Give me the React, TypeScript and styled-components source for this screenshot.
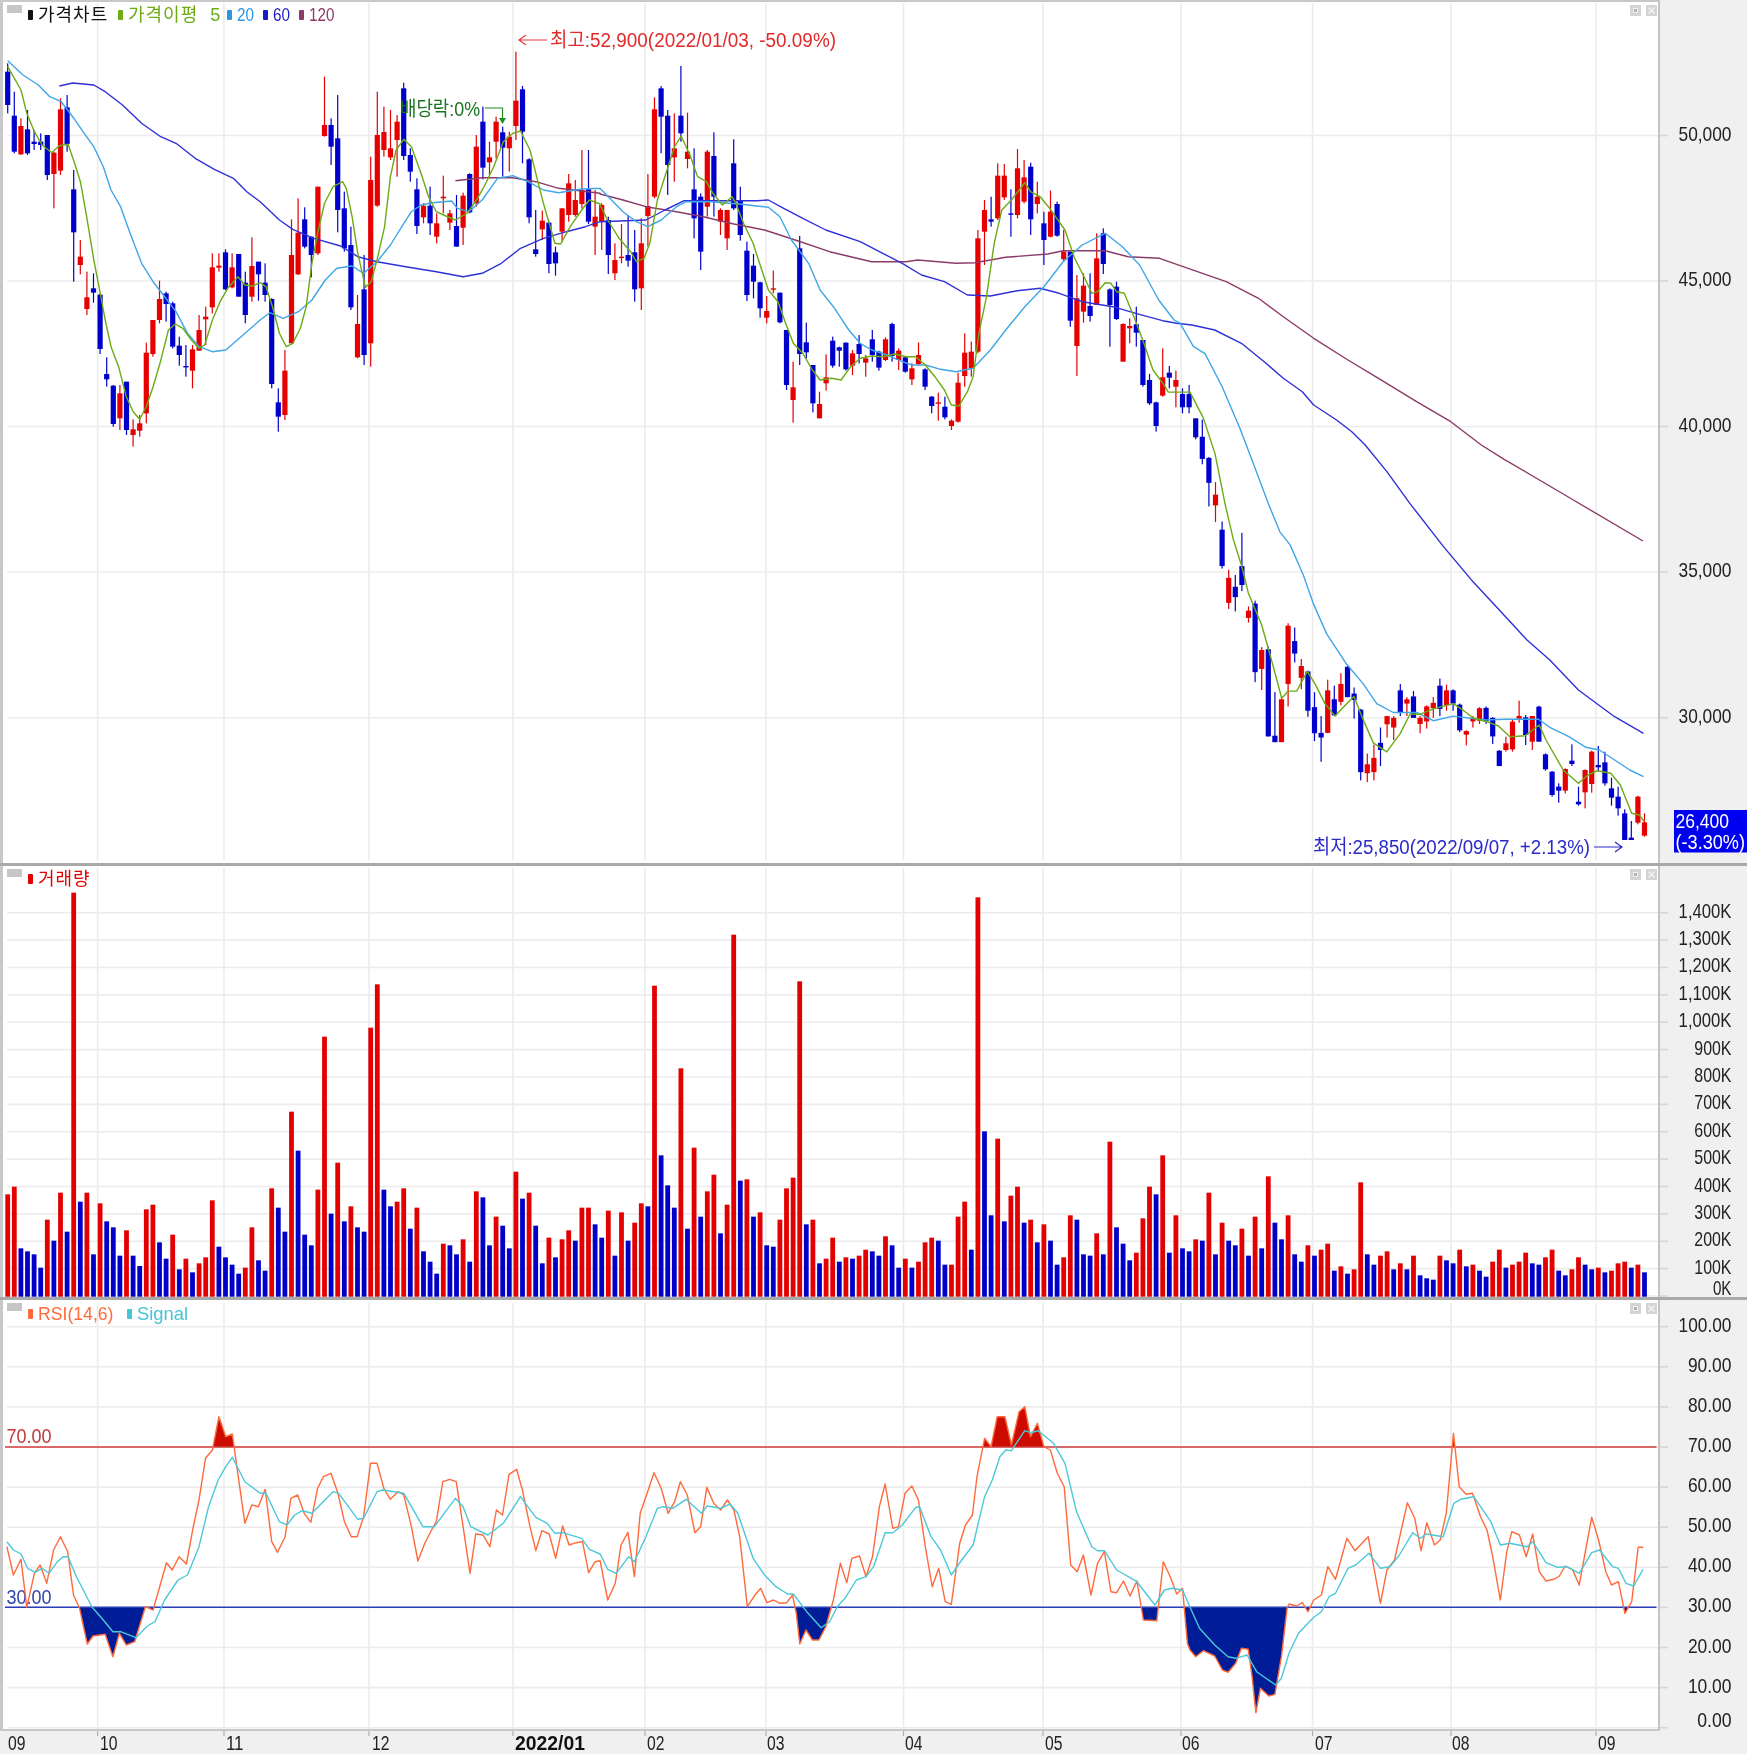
import React from "react";
import styled, { createGlobalStyle } from "styled-components";

const GlobalStyle = createGlobalStyle`
  html, body { margin: 0; padding: 0; background: #f0f0f0; }
`;

const FONT = `"Liberation Sans", "Noto Sans CJK KR", sans-serif`;
const PLOT_W = 1660;
const AXIS_W = 87;

const Page = styled.div`
  width: 1747px;
  height: 1754px;
  display: flex;
  flex-direction: column;
  background: #f0f0f0;
  overflow: hidden;
  font-family: ${FONT};
`;

const Pane = styled.section<{ $h: number; $line?: boolean }>`
  flex: 0 0 ${(p) => p.$h}px;
  display: flex;
  box-sizing: border-box;
  border-bottom: ${(p) => (p.$line ? "3px solid #a9a9a9" : "none")};
`;

const Plot = styled.div<{ $top?: boolean; $bottom?: boolean }>`
  position: relative;
  flex: 0 0 ${PLOT_W}px;
  background: #fff;
  box-sizing: border-box;
  box-shadow: inset 3px 0 0 #c8c8c8, inset -2px 0 0 #c4c4c4
    ${(p) => (p.$top ? ", inset 0 2px 0 #c8c8c8" : "")}
    ${(p) => (p.$bottom ? ", inset 0 -2px 0 #c8c8c8" : "")};
`;

const Axis = styled.div`
  flex: 0 0 ${AXIS_W}px;
`;

const ChartSvg = styled.svg`
  display: block;
  filter: blur(0.35px);
`;

const CollapseTab = styled.div<{ $top: number }>`
  position: absolute;
  left: 7px;
  top: ${(p) => p.$top}px;
  width: 15px;
  height: 8px;
  background: #c6c6c6;
`;

const Legend = styled.div<{ $top: number }>`
  position: absolute;
  left: 28px;
  top: ${(p) => p.$top}px;
  height: 20px;
  display: flex;
  align-items: center;
  gap: 10px;
`;

const LegendItem = styled.div`
  display: flex;
  align-items: center;
  gap: 5px;
`;

const Marker = styled.span<{ $color: string }>`
  width: 5px;
  height: 10px;
  border-radius: 1px;
  background: ${(p) => p.$color};
`;

const LegendText = styled.span<{ $color: string; $w: number; $squeeze?: number }>`
  display: inline-block;
  width: ${(p) => p.$w}px;
  font-size: 18px;
  line-height: 20px;
  white-space: pre;
  color: ${(p) => p.$color};
  letter-spacing: ${(p) => (p.$squeeze ? "0" : "1px")};
  transform-origin: left center;
  transform: scaleX(${(p) => p.$squeeze ?? 1});
  filter: blur(0.3px);
`;

const WinButtons = styled.div<{ $top: number }>`
  position: absolute;
  right: 3px;
  top: ${(p) => p.$top}px;
  display: flex;
  gap: 5px;
`;

const WinButton = styled.div`
  width: 11px;
  height: 11px;
  background: #d4d4d4;
  display: flex;
  align-items: center;
  justify-content: center;
`;

const RestoreGlyph = styled.span`
  width: 3px;
  height: 3px;
  background: #b0b0b0;
  border: 1.5px solid #f4f4f4;
`;

const TimeAxis = styled.div`
  flex: 0 0 23px;
`;

const Label = styled.text<{ $size?: number; $bold?: boolean }>`
  font-family: ${FONT};
  font-size: ${(p) => p.$size ?? 21}px;
  font-weight: ${(p) => (p.$bold ? 700 : 400)};
`;

type Candle = [number, number, number, number, number];
const r = 1;
const b = 0;

// [colour, wick top, body top, body bottom, wick bottom]; y values are in 3x units of the page
const candlesA: Candle[] = [
  [b,190,215,315,340],[b,275,347,455,460],[r,355,378,463,465],[b,330,388,460,465],[b,390,425,432,450],
  [b,400,425,435,450],[b,405,405,525,540],[r,455,458,522,625],[r,295,328,512,525],[b,285,322,432,455],
  [b,510,568,697,845],[r,720,770,795,823],[r,815,892,927,945],[b,820,865,878,908],[b,880,884,1047,1062],
  [b,1072,1122,1138,1160],[b,1155,1157,1272,1280],[r,1155,1180,1255,1290],[b,1145,1145,1290,1305],[r,1258,1288,1305,1340],
  [r,1245,1270,1292,1310],[r,1028,1058,1240,1270],[r,960,960,1062,1070],[r,842,897,960,970],[b,875,880,912,965],
  [b,905,910,1040,1045],[b,1010,1037,1065,1097],[b,1035,1098,1102,1130],[r,1035,1048,1112,1165],[r,945,990,1052,1050],
  [r,920,950,958,1035],[r,760,802,922,940],[r,760,797,803,815],[b,748,757,868,870],[r,760,802,862,865],
  [b,762,762,890,890],[b,815,848,945,970],[r,712,798,890,905],[b,785,785,823,902],[b,790,848,885,905],
  [b,895,897,1152,1165],[b,1165,1207,1250,1295],[r,1050,1112,1245,1260],[r,658,765,1030,945],[r,595,698,823,825],
  [b,622,658,740,745],[b,710,710,765,832],[r,560,560,760,765],[r,230,375,408,410],[b,355,375,440,495],
  [b,285,415,630,697],[b,575,625,745,755],[b,680,735,922,930],[r,885,972,1072,1075],[b,765,868,1065,1095],
  [r,470,540,1030,1100],[r,275,405,617,620],[r,320,396,450,470],[r,330,445,472,480],[r,345,365,420,530],
  [b,248,265,468,480],[b,445,465,515,545],[b,535,568,678,702],[r,610,617,652,670],[b,560,617,670,705],
  [r,640,670,710,730],[r,527,590,595,640],[r,630,640,668,690],[b,585,678,740,740],[r,578,587,683,735],
  [b,520,522,637,640],[r,405,440,610,620],[b,320,365,503,538],[r,425,472,487,525],[r,350,365,425,475],
  [b,380,397,443,530],[r,395,410,445,515],[r,155,302,378,420],[b,258,268,395,490],[b,475,478,652,670],
  [b,630,748,762,770],[r,632,662,688,720],[b,665,668,792,820],[b,740,757,790,827],[r,625,625,695,725],
  [r,522,550,645,665],[r,540,600,645,650],[r,450,570,612,625],[b,450,568,665,672],[r,570,650,680,765],
  [r,610,615,665,750],[b,650,660,765,822],[r,730,780,820,840],[r,672,770,773,790],[b,645,765,782,800],
  [b,690,757,868,905],[r,655,730,865,930],[r,522,618,648,740],[r,292,328,590,595],[b,258,265,350,460],
  [b,330,347,495,585],[r,340,445,472,545],[b,198,347,400,425],[r,338,455,477,505],[b,445,568,655,715],
  [b,580,590,755,810],[r,450,455,620,650],[b,397,468,590,650],[r,625,630,665,705],[r,630,630,715,750],
  [b,418,490,625,630],[b,560,600,705,722],[b,725,752,885,903],[b,762,797,845,895],[b,845,847,925,953],
  [r,888,933,953,970],[r,812,865,869,880],[b,878,878,967,970],[b,990,990,1155,1170],[r,1085,1162,1200,1268],
  [b,708,745,1062,1095],[b,968,1027,1057,1075],[b,1095,1095,1210,1237],[r,1175,1212,1255,1255],[r,1063,1132,1150,1172],
  [b,1010,1022,1097,1103],[b,1040,1042,1052,1100],[b,1027,1028,1108,1112],[r,1050,1060,1097,1125],[b,1005,1032,1062,1090],
  [r,1065,1075,1088,1130],[b,990,1018,1065,1085],[b,1052,1055,1103,1112],[r,1012,1018,1080,1083],[b,968,972,1068,1085],
  [r,1045,1052,1080,1110],[b,1068,1072,1115,1118],[r,1090,1105,1138,1155],[r,1027,1065,1092,1097],[b,1105,1108,1160,1170],
  [b,1188,1190,1218,1240],[r,1178,1207,1210,1262],[b,1190,1220,1252,1258],[r,1258,1262,1278,1290],[r,1118,1148,1265,1268],
  [r,1000,1058,1128,1160],[r,1025,1055,1105,1130],[r,690,715,1055,1060],[r,600,630,695,795],[b,590,658,665,680],
  [r,490,527,655,660],[r,492,527,592,600],[b,568,640,643,710],[r,447,505,645,655],[r,480,532,605,610],
  [b,488,500,658,705],[r,545,590,612,640],[b,635,670,720,795],[r,572,635,710,712],[b,605,612,707,710],
  [r,690,755,778,785],[b,755,755,962,980],[r,825,895,1038,1128],[r,820,857,935,968],[b,820,918,948,965],
  [r,700,775,915,915],[b,685,700,792,822],[b,865,868,915,1040],[b,845,860,957,960],[r,970,972,1085,1085],
  [r,955,978,985,1030],[b,920,973,998,1040],[b,1020,1020,1155,1160],[b,1122,1140,1210,1215],[b,1205,1207,1278,1295],
  [r,1045,1132,1187,1190],[b,1098,1118,1133,1165],[r,1112,1140,1160,1222],[b,1165,1182,1222,1240],[b,1155,1182,1222,1240],
  [b,1255,1255,1312,1318],
];

// same, y = 300 + value / 2.8
const candlesB: Candle[] = [
  [b,335,383,445,460],[b,440,442,512,578],[r,510,545,575,622],[b,620,643,745,752],[r,755,778,848,865],
  [b,770,803,832,872],[b,652,745,798,815],[r,858,870,890,903],[b,842,850,1042,1070],[r,972,980,1033,1092],
  [b,970,978,1222,1222],[b,1098,1220,1238,1238],[r,1110,1118,1238,1238],[r,905,912,1075,1138],[b,917,955,990,1015],
  [r,1005,1025,1058,1090],[b,1038,1040,1150,1167],[b,1098,1140,1213,1235],[b,1165,1212,1225,1293],[r,1063,1093,1212,1213],
  [b,1080,1118,1163,1165],[r,1045,1075,1125,1135],[b,1025,1027,1112,1112],[b,1085,1102,1120,1172],[b,1145,1147,1322,1345],
  [r,1270,1300,1325,1350],[r,1245,1282,1322,1345],[b,1197,1240,1260,1305],[r,1165,1165,1188,1225],[r,1165,1170,1197,1232],
  [b,1075,1093,1155,1165],[r,1112,1118,1130,1165],[b,1095,1110,1170,1170],[r,1165,1170,1187,1213],[r,1135,1138,1180,1200],
  [r,1112,1128,1143,1170],[b,1060,1080,1145,1165],[r,1077,1093,1135,1150],[b,1090,1093,1130,1150],[b,1130,1133,1205,1210],
  [r,1205,1207,1217,1247],[r,1165,1170,1180,1197],[r,1140,1143,1178,1187],[b,1138,1142,1180,1187],[b,1168,1170,1222,1243],
  [b,1260,1262,1305,1305],
];

// same, y = 640 + value / 3
const candlesC: Candle[] = [
  [r,290,310,330,335],[r,240,245,328,335],[r,182,228,236,248],[b,225,232,285,315],[r,228,228,305,330],
  [b,197,200,305,305],[b,340,343,388,392],[b,393,395,465,470],[b,430,440,452,488],[r,385,387,452,460],
  [b,313,362,372,378],[b,440,485,493,497],[r,388,390,457,505],[r,332,335,432,458],[b,318,375,382,395],
  [b,335,367,430,437],[b,413,445,473,497],[b,440,470,505,527],[b,508,520,600,600],[b,543,593,600,600],
  [r,467,470,548,553],[r,520,547,587,590],
];

const candles = [
  ...candlesA.map(([c, ...v]) => [c, ...v.map((y) => y / 3)]),
  ...candlesB.map(([c, ...v]) => [c, ...v.map((y) => 300 + y / 2.8)]),
  ...candlesC.map(([c, ...v]) => [c, ...v.map((y) => 640 + y / 3)]),
];

// [colour, bar top]
const volumesA: number[][] = [
  [r,1033],[r,1010],[b,1195],[b,1204],[b,1213],[b,1253],[r,1109],[b,1172],[r,1028],[b,1145],
  [r,128],[b,1055],[r,1028],[b,1213],[r,1060],[b,1114],[b,1132],[b,1217],[r,1141],[b,1217],
  [b,1248],[r,1078],[r,1064],[b,1177],[b,1226],[r,1154],[b,1258],[r,1226],[b,1267],[r,1240],
  [r,1222],[r,1051],[b,1190],[b,1222],[b,1244],[b,1271],[r,1253],[r,1132],[b,1231],[b,1262],
  [r,1015],[b,1073],[b,1145],[r,785],[b,902],[b,1154],[b,1186],[r,1019],[r,560],[b,1091],
  [r,938],[b,1114],[r,1069],[b,1132],[b,1145],[r,533],[r,403],[b,1019],[b,1069],[r,1055],
  [r,1015],[b,1136],[r,1073],[b,1204],[b,1235],[b,1271],[r,1181],[b,1186],[b,1213],[r,1168],
  [b,1235],[r,1024],[b,1042],[b,1186],[r,1100],[b,1127],[b,1195],[r,965],[b,1046],[r,1028],
  [b,1127],[b,1240],[r,1163],[b,1222],[r,1168],[r,1141],[b,1172],[r,1073],[r,1073],[b,1123],
  [b,1163],[r,1082],[b,1217],[r,1087],[b,1172],[r,1118],[r,1060],[b,1069],[r,407],[b,916],
  [b,1006],[b,1073],[r,655],[b,1136],[r,893],[b,1100],[r,1024],[r,974],[b,1150],[r,1064],
  [r,254],[b,992],[r,988],[b,1100],[r,1087],[b,1186],[b,1190],[r,1109],[r,1015],[r,983],
  [r,394],[b,1123],[r,1109],[b,1240],[r,1226],[r,1163],[b,1235],[r,1222],[b,1226],[r,1217],
  [r,1199],[b,1204],[b,1217],[r,1159],[b,1186],[b,1253],[r,1226],[b,1253],[r,1235],[r,1177],
  [r,1163],[b,1172],[b,1244],[r,1244],[r,1100],[r,1055],[b,1199],[r,142],[b,844],[b,1096],
  [r,866],[b,1114],[r,1037],[r,1010],[b,1118],[r,1109],[b,1177],[r,1123],[b,1172],[b,1244],
  [r,1222],[r,1096],[b,1109],[b,1213],[b,1217],[r,1150],[b,1213],[r,875],[b,1132],[b,1181],
  [b,1231],[r,1208],[r,1105],[r,1010],[b,1033],[r,916],[b,1208],[r,1096],[b,1195],[b,1204],
];

const volumesB: number[][] = [
  [r,418],[b,422],[r,278],[b,463],[r,368],[b,422],[b,436],[r,386],[b,467],[r,350],
  [b,445],[r,229],[b,368],[b,418],[r,346],[b,463],[b,485],[r,436],[b,467],[r,449],
  [r,431],[b,512],[r,499],[b,521],[r,508],[r,247],[b,463],[b,494],[r,467],[r,454],
  [b,508],[r,490],[b,508],[r,467],[b,526],[b,535],[b,539],[r,467],[b,481],[b,490],
  [r,449],[b,499],[r,494],[b,512],[b,530],[r,485],[r,449],[b,503],[r,494],[r,485],
  [r,458],[b,490],[b,494],[r,472],[r,449],[b,512],[b,526],[r,508],[r,472],[b,494],
  [b,508],[r,503],[b,517],[r,512],[r,490],[r,485],[b,503],[r,494],[b,517],
];

const volumes = [
  ...volumesA.map(([c, y]) => [c, 850 + y / 3]),
  ...volumesB.map(([c, y]) => [c, 1100 + y / 3]),
];

const barX = (i: number) => 7.7 + 6.6 * i;

// traced points, flat x,y lists, each with its own offset and scale
const trace = (list: number[], ox: number, sx: number, oy: number, sy: number) => {
  const out: number[][] = [];
  for (let i = 0; i < list.length; i += 2) out.push([ox + list[i] / sx, oy + list[i + 1] / sy]);
  return out;
};
const left = (l: number[]) => trace(l, 0, 2.613, 0, 3);
const mid = (l: number[]) => trace(l, 600, 2.613, 0, 3);
const right = (l: number[]) => trace(l, 1150, 2.626, 0, 3);
const lower = (l: number[]) => trace(l, 1100, 3, 300, 2.8);
const tail = (l: number[]) => trace(l, 1150, 2.626, 640, 3);
const rsiLeft = (l: number[]) => trace(l, 0, 2.613, 1280, 3);
const rsiMid = (l: number[]) => trace(l, 600, 2.613, 1280, 3);
const rsiRight = (l: number[]) => trace(l, 1150, 2.626, 1280, 3);

const ma5 = [
  ...left([20,200,55,270,70,340,90,395,110,435,135,458,155,437,178,433,195,490,210,545,225,640,245,780,262,880,275,960,290,1040,310,1100,330,1190,348,1235,365,1258,382,1220,400,1160,418,1090,440,990,458,972,478,985,500,1020,520,1045,535,1035,555,960,575,905,595,865,622,830,640,855,660,858,680,848,695,860,712,920,730,1000,748,1040,765,1030,785,985,800,920,815,790,830,700,848,610,870,560,895,545,905,565,920,650,935,760,955,862,970,845,985,780,1005,680,1020,530,1035,450,1055,418,1075,440,1100,520,1120,590,1140,635,1165,648,1190,660,1220,640,1245,600,1265,560,1290,500,1315,425,1340,400,1360,393,1385,450,1400,520,1420,610,1435,670,1450,730,1465,732,1490,680,1520,630,1540,600,1568,612]),
  ...mid([0,615,20,660,50,715,80,755,95,785,115,775,130,730,150,600,175,510,195,440,212,408,235,465,255,530,278,545,295,580,320,615,345,590,355,610,375,670,400,730,420,800,440,870,465,905,485,970,505,1030,530,1060,555,1110,575,1140,605,1135,630,1140,655,1100,680,1075,710,1068,740,1070,770,1062,800,1070,825,1070,850,1095,875,1130,900,1170,918,1215,938,1218,960,1175,975,1130,990,1000,1010,890,1030,730,1050,630,1075,600,1110,548,1125,575,1150,590,1175,625,1215,690,1240,775,1265,830,1285,880,1300,875,1320,848,1335,850,1350,875,1370,880,1395,950,1420,1025,1445,1110]),
  ...lower([190,235,205,258,240,258,270,258,310,330,345,430,375,570,400,670,425,745,445,820,485,910,515,1010,545,1115,565,1095,590,1095,622,1040,645,1075,675,1130,705,1165,735,1135,762,1110,785,1165,820,1240,860,1265,900,1215,930,1160,960,1160,1000,1145,1060,1130]),
  ...tail([815,205,850,235,885,245,915,258,945,290,985,287,1022,255,1040,300,1085,390,1125,430,1150,405,1175,392,1210,400,1235,435,1265,520,1285,525,1298,545]),
];

const ma20 = [
  ...left([20,182,60,225,100,255,130,290,160,305,190,350,220,400,245,440,270,500,290,570,315,620,340,700,370,790,400,845,430,890,460,935,490,1000,520,1040,555,1055,590,1050,620,1020,650,990,680,960,705,938,740,955,780,935,815,900,850,840,880,805,920,798,950,820,985,785,1020,735,1050,680,1075,635,1100,615,1130,608,1180,603,1195,625,1225,635,1260,600,1300,535,1340,527,1380,545,1420,570,1460,578,1520,567,1568,565]),
  ...mid([0,565,30,600,60,635,95,665,125,680,160,660,200,620,225,605,290,605,370,613,440,622,470,650,500,720,545,790,575,870,610,920,650,990,680,1030,710,1050,750,1065,790,1085,815,1095,850,1095,890,1108,930,1115,975,1105,1020,1050,1060,990,1110,920,1160,860,1210,785,1260,735,1320,700,1365,740,1410,795,1460,900,1500,960]),
  ...lower([240,65,280,130,315,150,365,240,420,360,465,470,505,570,540,650,570,685,610,770,640,850,680,935,740,1020,790,1075,830,1130,880,1155,950,1155,1000,1178,1060,1165]),
  ...tail([880,240,930,238,1020,238,1050,262,1100,290,1145,322,1180,330,1220,360,1260,390,1296,410]),
];

const ma60 = [
  ...left([155,258,190,249,245,255,275,275,320,315,370,370,420,410,460,430,510,475,560,508,610,535,645,575,680,605,730,660,765,688,820,715,890,738,935,770,985,785,1060,800,1140,815,1210,830,1260,820,1310,790,1360,745,1420,715,1480,695,1530,680,1568,665]),
  ...mid([0,665,120,660,170,630,220,602,410,602,440,600,480,625,530,655,590,690,680,725,730,755,790,790,840,825,900,845,960,885,1020,888,1090,872,1150,865,1200,880,1260,905,1340,920,1400,940,1470,962]),
  ...right([70,970,110,975,170,990,240,1030,300,1085,350,1135,400,1175,430,1215,490,1260,530,1295,565,1335]),
  ...lower([860,480,930,570,1030,690,1120,790,1200,870]),
  ...tail([990,0,1050,60,1125,150,1220,230,1296,280]),
];

const ma120 = [
  ...left([1190,542,1260,533,1340,533,1400,545,1460,565,1568,580]),
  ...mid([0,582,60,600,120,620,200,635,270,650,350,672,430,690,510,720,600,755,710,785,800,785,830,780,930,790,980,788,1060,772,1170,762,1210,752,1320,752,1380,770]),
  ...right([25,775,100,805,200,845,285,895,350,950,430,1015,520,1080,600,1135,700,1205,790,1265,870,1335,930,1378]),
  [1570, 498],
  [1643, 541],
];

const rsi = [
  ...rsiLeft([18,800,35,885,55,838,70,982,90,880,105,855,122,910,140,810,158,770,177,815,192,945,208,985,228,1092,243,1068,275,1063,295,1130,312,1060,330,1095,352,1085,380,980,400,990,435,848,450,870,468,830,487,852,505,740,520,660,537,535,555,510,572,410,590,470,607,462,625,610,640,730,658,675,675,680,693,628,710,785,725,817,745,770,760,655,778,645,795,700,812,727,830,625,845,590,865,580,883,640,900,725,918,770,933,770,950,710,968,550,985,550,1003,625,1020,658,1040,635,1055,645,1075,740,1092,843,1110,790,1130,745,1140,725,1157,605,1175,598,1192,605,1210,740,1228,880,1243,762,1262,765,1280,800,1297,690,1313,705,1330,583,1350,568,1365,630,1385,740,1400,812,1416,752,1435,762,1452,835,1470,738,1487,795,1505,788,1522,785,1538,878,1555,845,1568,842]),
  ...rsiMid([20,960,40,910,55,795,73,757,90,890,105,700,123,640,141,578,160,625,178,700,195,665,210,605,228,645,248,758,263,740,279,622,297,670,315,690,333,660,350,690,365,770,385,980,405,945,420,925,436,968,453,960,470,970,488,968,503,945,513,1000,522,1092,538,1050,555,1080,572,1080,590,1040,610,960,628,850,645,908,658,835,678,828,695,890,712,830,730,680,745,612,765,745,780,740,797,640,815,618,832,660,850,800,868,920,885,865,902,965,918,973,940,790,955,735,973,705,985,590,1005,475,1022,500,1038,410,1058,410,1075,495,1095,395,1110,380,1125,470,1143,430,1160,500,1177,510,1195,580,1213,620,1230,855,1247,875,1263,825,1283,945,1300,850,1318,815,1335,935,1350,938,1368,903,1385,948,1403,903,1420,1020,1455,1022,1472,845,1490,890,1507,942,1522,925,1535,1090]),
  ...rsiRight([105,1110,120,1130,140,1112,170,1128,190,1170,205,1177,225,1150,240,1105,258,1108,268,1190,278,1298,290,1225,312,1248,328,1243,345,1130,360,985,365,972,385,978,400,968,415,995,430,960,450,945,467,860,487,898,517,775,538,812,573,770,605,970,622,870,642,840,676,668,695,715,712,812,727,728,747,795,762,780,778,700,797,460,812,620,830,643,847,640,868,710,885,750,900,830,920,960,937,815,950,755,970,765,988,830,1005,762,1022,875,1040,903,1060,898,1075,888,1090,858,1110,870,1127,915,1160,712,1178,780,1197,875,1212,915,1230,905,1247,1000,1265,965,1282,802,1295,802]),
];

const signal = [
  ...rsiLeft([18,785,35,810,55,822,72,865,92,877,110,865,128,880,150,845,165,830,178,830,200,890,240,980,270,1020,295,1055,315,1055,355,1073,385,1038,405,1025,430,960,465,900,490,885,520,800,545,680,570,600,590,560,607,532,640,605,680,640,695,640,730,725,750,735,770,705,790,692,815,700,870,635,885,640,935,718,950,715,985,635,1000,630,1055,640,1105,740,1135,740,1190,655,1210,680,1230,740,1275,765,1315,730,1360,650,1400,712,1430,730,1450,760,1470,758,1520,775,1540,808,1568,822]),
  ...rsiMid([20,868,42,880,75,830,90,845,120,770,150,685,165,680,190,685,225,658,265,700,280,678,315,685,340,672,360,700,400,835,430,885,460,920,490,942,505,942,540,995,578,1043,600,1025,620,980,640,955,670,900,695,890,715,860,745,758,765,758,790,735,825,682,835,680,865,770,890,810,918,885,945,840,975,795,1005,650,1025,600,1045,530,1060,510,1075,512,1110,452,1125,458,1145,452,1185,490,1215,550,1245,695,1285,800,1300,812,1318,812,1350,870,1403,905,1450,975,1475,930,1495,925,1522,930,1545,990]),
  ...rsiRight([130,1045,170,1095,205,1130,225,1135,255,1125,280,1175,330,1215,345,1195,365,1120,390,1060,430,1012,450,995,470,950,487,940,520,865,540,855,575,820,605,865,630,860,655,825,690,758,710,775,725,762,770,770,798,670,815,658,850,650,895,725,920,795,945,790,990,800,1005,785,1040,848,1070,862,1095,860,1127,880,1160,818,1180,810,1215,860,1230,865,1250,910,1270,918,1295,868]),
];

const toPoints = (p: number[][]) => p.map(([x, y]) => `${x.toFixed(1)},${y.toFixed(1)}`).join(" ");

const GRID_X = [97.6, 224, 369, 513, 645, 766, 903.5, 1043, 1181, 1312.6, 1451, 1596];
const GRID = "#ececec";

const PRICE_TICKS = [
  ["50,000", 135.5], ["45,000", 281], ["40,000", 426.5], ["35,000", 572], ["30,000", 717.7],
] as const;

const VOLUME_TICKS = Array.from({ length: 15 }, (_, i) => {
  const k = 1400 - i * 100;
  return [k >= 1000 ? `1,${String(k - 1000).padStart(3, "0")}K` : `${k}K`, 912.7 + i * 27.38] as const;
});

const RSI_TICKS = Array.from({ length: 11 }, (_, i) => {
  const v = 100 - i * 10;
  return [`${v}.00`, 1727.7 - v * 4.01] as const;
});

const MONTHS: [string, number, boolean?][] = [
  ["09", 8], ["10", 100], ["11", 226], ["12", 372], ["2022/01", 515, true], ["02", 647], ["03", 767],
  ["04", 905], ["05", 1045], ["06", 1182], ["07", 1315], ["08", 1452], ["09", 1598],
];

const labelWidth = (text: string) =>
  [...text].reduce((w, ch) => w + (ch === "," || ch === "." ? 6.4 : 9.3), 0);

const Grid = ({ ys, top, bottom }: { ys: readonly number[]; top: number; bottom: number }) => (
  <g stroke={GRID} strokeWidth={1.6}>
    {GRID_X.map((x) => <line key={x} x1={x} x2={x} y1={top} y2={bottom} />)}
    {ys.map((y) => <line key={y} x1={7} x2={1658} y1={y} y2={y} />)}
  </g>
);

const Line = ({ points, color, width = 1.4 }: { points: number[][]; color: string; width?: number }) => (
  <polyline points={toPoints(points)} fill="none" stroke={color} strokeWidth={width} strokeLinejoin="round" />
);

const WindowControls = ({ top }: { top: number }) => (
  <WinButtons $top={top}>
    <WinButton><RestoreGlyph /></WinButton>
    <WinButton>
      <svg width="7" height="7" viewBox="0 0 7 7">
        <path d="M0.5 0.5L6.5 6.5M6.5 0.5L0.5 6.5" stroke="#f6f6f6" strokeWidth="1.4" />
      </svg>
    </WinButton>
  </WinButtons>
);

const YAxis = ({ y0, h, ticks, last }: { y0: number; h: number; ticks: readonly (readonly [string, number])[]; last?: number }) => (
  <ChartSvg width={AXIS_W} height={h} viewBox={`${PLOT_W} ${y0} ${AXIS_W} ${h}`}>
    {ticks.map(([text, y], i) => {
      const w = labelWidth(text);
      const base = i === ticks.length - 1 && last ? last : y + 5;
      return (
        <g key={text}>
          <line x1={PLOT_W} x2={1668} y1={y} y2={y} stroke="#d6d6d6" strokeWidth={1.6} />
          <Label x={1731.5 - w} y={base} textLength={w} lengthAdjust="spacingAndGlyphs" fill="#222">{text}</Label>
        </g>
      );
    })}
  </ChartSvg>
);

const PriceChart = () => (
  <ChartSvg width={PLOT_W} height={863} viewBox={`0 0 ${PLOT_W} 863`}>
    <Grid ys={PRICE_TICKS.map(([, y]) => y)} top={3} bottom={860} />
    {candles.map(([c, wt, bt, bb, wb], i) => {
      const x = barX(i);
      const fill = c === r ? "#e60000" : "#0000cc";
      return (
        <g key={i} fill={fill}>
          <rect x={x - 0.6} y={wt} width={1.2} height={Math.max(wb, bb) - wt} />
          <rect x={x - 2.6} y={bt} width={5.2} height={Math.max(bb - bt, 1.4)} />
        </g>
      );
    })}
    <Line points={ma120} color="#8c3a68" />
    <Line points={ma60} color="#3030d8" />
    <Line points={ma20} color="#3fa6e8" />
    <Line points={ma5} color="#6cab14" />

    <path d="M526 35L519 40L526 45M519 40H547" fill="none" stroke="#e23a3a" strokeWidth={1.2} />
    <Label x={550} y={46.5} $size={20} textLength={286} lengthAdjust="spacingAndGlyphs" fill="#e22a2a">
      최고:52,900(2022/01/03, -50.09%)
    </Label>

    <Label x={400} y={116} $size={20} textLength={80} lengthAdjust="spacingAndGlyphs" fill="#1a7420">
      배당락:0%
    </Label>
    <path d="M485 108H502.5V118" fill="none" stroke="#1e8c1e" strokeWidth={1.2} />
    <path d="M499 118H506L502.5 124Z" fill="#1e8c1e" />

    <Label x={1313} y={854} $size={20} textLength={277} lengthAdjust="spacingAndGlyphs" fill="#2a2ac8">
      최저:25,850(2022/09/07, +2.13%)
    </Label>
    <path d="M1594 847H1622M1615 842L1622 847L1615 852" fill="none" stroke="#2a2ac8" strokeWidth={1.2} />
  </ChartSvg>
);

const PriceAxis = () => (
  <ChartSvg width={AXIS_W} height={863} viewBox={`${PLOT_W} 0 ${AXIS_W} 863`}>
    {PRICE_TICKS.map(([text, y]) => (
      <g key={text}>
        <line x1={PLOT_W} x2={1668} y1={y} y2={y} stroke="#d6d6d6" strokeWidth={1.6} />
        <Label x={1678.5} y={y + 5} textLength={53} lengthAdjust="spacingAndGlyphs" fill="#222">{text}</Label>
      </g>
    ))}
    <rect x={1674} y={810} width={73} height={42.5} fill="#0000f0" />
    <Label x={1675.5} y={828} $size={20} textLength={53.5} lengthAdjust="spacingAndGlyphs" fill="#fff">26,400</Label>
    <Label x={1675.5} y={849} $size={20} textLength={69.5} lengthAdjust="spacingAndGlyphs" fill="#fff">(-3.30%)</Label>
  </ChartSvg>
);

const VolumeChart = () => (
  <ChartSvg width={PLOT_W} height={431} viewBox={`0 866 ${PLOT_W} 431`}>
    <Grid ys={VOLUME_TICKS.map(([, y]) => y)} top={868} bottom={1296} />
    {volumes.map(([c, top], i) => (
      <rect
        key={i}
        x={barX(i) - 2.4}
        y={top}
        width={4.8}
        height={1296.7 - top}
        fill={c === r ? "#e20000" : "#0000c8"}
      />
    ))}
  </ChartSvg>
);

const y70 = 1447;
const y30 = 1607.3;

const RsiChart = () => (
  <ChartSvg width={PLOT_W} height={429} viewBox={`0 1300 ${PLOT_W} 429`}>
    <defs>
      <clipPath id="overBought"><rect x={0} y={1300} width={PLOT_W} height={y70 - 1300} /></clipPath>
      <clipPath id="overSold"><rect x={0} y={y30} width={PLOT_W} height={1729 - y30} /></clipPath>
    </defs>
    <Grid ys={RSI_TICKS.map(([, y]) => y)} top={1303} bottom={1729} />
    <polygon
      clipPath="url(#overBought)"
      points={toPoints([[rsi[0][0], y70], ...rsi, [rsi[rsi.length - 1][0], y70]])}
      fill="#cc0c00"
    />
    <polygon
      clipPath="url(#overSold)"
      points={toPoints([[rsi[0][0], y30], ...rsi, [rsi[rsi.length - 1][0], y30]])}
      fill="#001c96"
    />
    <line x1={5} x2={1656.5} y1={y70} y2={y70} stroke="#d23c3c" strokeWidth={1.6} />
    <line x1={5} x2={1656.5} y1={y30} y2={y30} stroke="#2a3eb8" strokeWidth={1.6} />
    <Label x={6.5} y={1443} $size={20} textLength={45} lengthAdjust="spacingAndGlyphs" fill="#c23a3a">70.00</Label>
    <Label x={6.5} y={1604} $size={20} textLength={45} lengthAdjust="spacingAndGlyphs" fill="#3344aa">30.00</Label>
    <Line points={rsi} color="#ff6a3c" />
    <Line points={signal} color="#4cc8d8" />
  </ChartSvg>
);

const TimeScale = () => (
  <ChartSvg width={1747} height={23} viewBox="0 1731 1747 23">
    {GRID_X.map((x) => <line key={x} x1={x} x2={x} y1={1731} y2={1736} stroke="#b0b0b0" strokeWidth={1.2} />)}
    {MONTHS.map(([text, x, bold]) => (
      <Label
        key={text + x}
        x={x}
        y={1750}
        $size={20}
        $bold={bold}
        textLength={bold ? 70 : 17.5}
        lengthAdjust="spacingAndGlyphs"
        fill={bold ? "#111" : "#222"}
      >
        {text}
      </Label>
    ))}
  </ChartSvg>
);

export default function App() {
  return (
    <>
      <GlobalStyle />
      <Page>
        <Pane $h={866} $line>
          <Plot $top>
            <PriceChart />
            <CollapseTab $top={5} />
            <Legend $top={5}>
              <LegendItem>
                <Marker $color="#111" />
                <LegendText $color="#111" $w={70}>가격차트</LegendText>
              </LegendItem>
              <LegendItem>
                <Marker $color="#6cab14" />
                <LegendText $color="#6cab14" $w={89}>가격이평  5</LegendText>
              </LegendItem>
              <LegendItem>
                <Marker $color="#2a96e0" />
                <LegendText $color="#2a96e0" $w={16} $squeeze={0.85}>20</LegendText>
              </LegendItem>
              <LegendItem>
                <Marker $color="#1a1ac8" />
                <LegendText $color="#1a1ac8" $w={16} $squeeze={0.85}>60</LegendText>
              </LegendItem>
              <LegendItem>
                <Marker $color="#8c3a68" />
                <LegendText $color="#8c3a68" $w={26} $squeeze={0.85}>120</LegendText>
              </LegendItem>
            </Legend>
            <WindowControls top={5} />
          </Plot>
          <Axis><PriceAxis /></Axis>
        </Pane>

        <Pane $h={434} $line>
          <Plot>
            <VolumeChart />
            <CollapseTab $top={3} />
            <Legend $top={3}>
              <LegendItem>
                <Marker $color="#e20000" />
                <LegendText $color="#e20000" $w={53}>거래량</LegendText>
              </LegendItem>
            </Legend>
            <WindowControls top={3} />
          </Plot>
          <Axis>
            <YAxis y0={866} h={431} ticks={VOLUME_TICKS} last={1295} />
          </Axis>
        </Pane>

        <Pane $h={431}>
          <Plot $bottom>
            <RsiChart />
            <CollapseTab $top={3} />
            <Legend $top={4}>
              <LegendItem>
                <Marker $color="#ff6a3c" />
                <LegendText $color="#ff6a3c" $w={79} $squeeze={0.98}>RSI(14,6)</LegendText>
              </LegendItem>
              <LegendItem>
                <Marker $color="#45c4d4" />
                <LegendText $color="#45c4d4" $w={51} $squeeze={1.02}>Signal</LegendText>
              </LegendItem>
            </Legend>
            <WindowControls top={3} />
          </Plot>
          <Axis>
            <YAxis y0={1300} h={429} ticks={RSI_TICKS} last={1727} />
          </Axis>
        </Pane>

        <TimeAxis><TimeScale /></TimeAxis>
      </Page>
    </>
  );
}
